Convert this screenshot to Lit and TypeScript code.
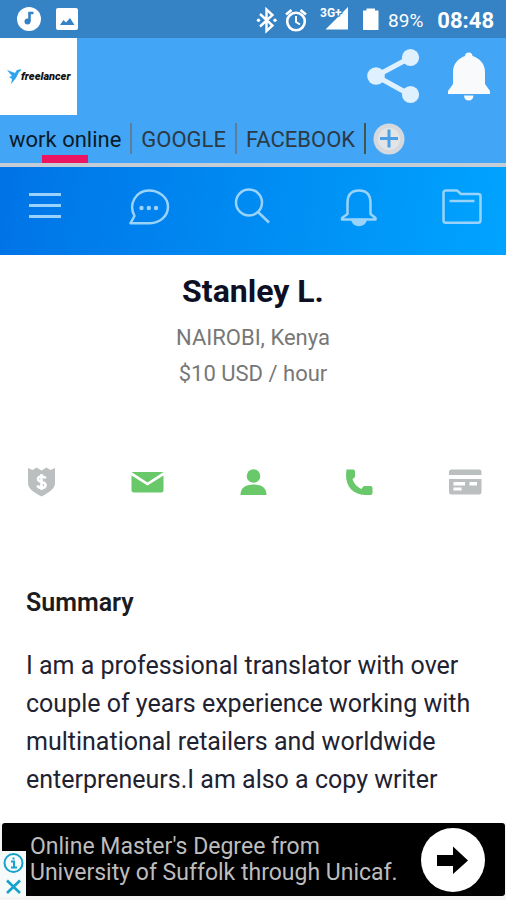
import { LitElement, html, css, svg, type TemplateResult } from "lit";
import { customElement, state } from "lit/decorators.js";

const navIcons: { label: string; art: TemplateResult }[] = [
  { label: "Menu", art: svg`<path d="M6 9.500h32M6 20.500h32M6 31.500h32" stroke-width="3"/>` },
  {
    label: "Messages",
    art: svg`<path d="M2.500 38.200L6.500 31C0 19 8 5.500 21 5.500C31 5.500 40 12.500 40 21.500C40 31 32 38.200 22 38.200Z"/>
      <g fill="currentColor" stroke="none"><circle cx="13.500" cy="23" r="2.200"/><circle cx="20.800" cy="23" r="2.200"/><circle cx="28" cy="23" r="2.200"/></g>`,
  },
  { label: "Search", art: svg`<circle cx="17" cy="17.500" r="13"/><path d="M26 27L37 37.500"/>` },
  {
    label: "Notifications",
    art: svg`<path d="M10.500 29V18C10.500 9.500 15 5.500 22 5.500S33.500 9.500 33.500 18V29L38.500 33V34.500H5V33Z"/>
      <path d="M15.500 35a6.500 5 0 0 0 13 0Z" fill="currentColor"/>`,
  },
  {
    label: "Projects",
    art: svg`<path d="M5 5.500H16L20 9H37Q39.500 9 39.500 11V35.500Q39.500 37.800 37 37.800H5Q2.500 37.800 2.500 35.500V8Q2.500 5.500 5 5.500Z"/><path d="M8.500 16H33.500" />`,
  },
];

const checks: { label: string; ok: boolean; art: TemplateResult }[] = [
  {
    label: "Payment not verified",
    ok: false,
    art: svg`<path d="M4 3L8.500 5L12.500 2.500L17.500 5.500L22.500 2.500L26.500 5L31 3V18C31 24 25 27.500 17.500 31.500C10 27.500 4 24 4 18Z"/>
      <path d="M21.500 13.500C20.500 11 14 10.500 14 14C14 18 21.500 16 21.500 20C21.500 24 14.500 23.500 13.500 20.500M17.500 9V25" fill="none" stroke="#fff" stroke-width="2.600"/>`,
  },
  {
    label: "Email verified",
    ok: true,
    art: svg`<path d="M1.500 7H33.500L17.500 17.500Z"/><path d="M1.500 10.500L17.500 20.500L33.500 10.500V25Q33.500 27.500 31 27.500H4Q1.500 27.500 1.500 25Z"/>`,
  },
  {
    label: "Profile completed",
    ok: true,
    art: svg`<circle cx="17.500" cy="11" r="6.800"/><path d="M4.500 30C4.500 23 9 19.500 17.500 19.500S30.500 23 30.500 30Z"/>`,
  },
  {
    label: "Phone verified",
    ok: true,
    art: svg`<path d="M4.500 4.500H11Q13 4.500 13 6.500V11.500Q13 12.500 10.500 14C12 19 15.500 22 19.500 24C21 21.500 21.500 21 23 21H28.500Q30.500 21 30.500 23V28Q30.500 30 28.500 30H23C11 29.500 4 22 4 10Z"/>`,
  },
  {
    label: "Deposit not made",
    ok: false,
    art: svg`<path d="M3.500 4.500H31Q33.500 4.500 33.500 6.500V10H1V6.500Q1 4.500 3.500 4.500ZM1 14H33.500V27.500Q33.500 29.500 31 29.500H3.500Q1 29.500 1 27.500Z"/>
      <path d="M5.500 17H17V20.500H5.500ZM5.500 22.500H13.500V25.500H5.500ZM21.500 17H29V20.500H21.500Z" fill="#fff"/>`,
  },
];

@customElement("app-root")
export class AppRoot extends LitElement {
  @state() private tab = "work online";

  static styles = css`
    :host {
      display: flex;
      flex-direction: column;
      min-height: 100vh;
      background: #fff;
      font-family: Roboto, "Liberation Sans", sans-serif;
      color: #1f2230;
    }
    svg { display: block; flex: none; }
    button, .link {
      display: block;
      padding: 0;
      border: 0;
      background: none;
      color: inherit;
      font: inherit;
      text-decoration: none;
      cursor: pointer;
    }
    .status {
      display: flex;
      align-items: center;
      height: 38px;
      padding: 0 12px 0 16px;
      background: #3582c4;
      color: #fff;
    }
    .grow { flex: 1; }
    .battery { font-size: 19px; padding: 3px 14px 0 6px; }
    .clock { font-size: 22px; font-weight: 700; padding-top: 3px; }
    .top { background: #42a5f5; border-bottom: 4px solid #c4ccd6; }
    .brand {
      display: flex;
      align-items: flex-start;
      justify-content: space-between;
    }
    .logo {
      display: flex;
      align-items: center;
      box-sizing: border-box;
      width: 77px;
      height: 77px;
      padding-left: 7px;
      background: #fff;
      color: #111;
      font-weight: 900;
      font-style: italic;
    }
    .wordmark { font-size: 11px; line-height: 16px; }
    .actions { display: flex; gap: 24px; padding: 8px 14px 0 0; }
    .tabs { display: flex; align-items: flex-start; height: 48px; }
    .tab {
      position: relative;
      height: 48px;
      padding: 0 9px;
      font-size: 22px;
      line-height: 50px;
      color: #2b3a45;
      white-space: nowrap;
    }
    .tab.on { color: #0b1a28; }
    .tab.on::after {
      content: "";
      position: absolute;
      left: 42px;
      bottom: 0;
      width: 46px;
      height: 8px;
      background: #ec1561;
    }
    .rule { width: 2px; height: 31px; margin-top: 8px; background: #5c7d9b; }
    .rule.dark { background: #45554a; }
    .add { margin: 7px 0 0 7px; }
    .nav {
      display: flex;
      justify-content: space-between;
      padding: 18px 22px 26px;
      background: linear-gradient(100deg, #0073e6, #00a4ff);
      color: #99d3fb;
    }
    main { flex: 1; }
    .profile { padding-top: 18px; text-align: center; }
    h1 { margin: 0 0 11px; font-size: 32px; line-height: 36px; font-weight: 700; color: #0d1024; }
    .meta { margin: 0; font-size: 22px; line-height: 36px; color: #777; }
    .checks {
      display: flex;
      justify-content: space-between;
      margin: 0;
      padding: 73px 24px 88px;
      list-style: none;
      color: #bcbfbf;
    }
    .ok { color: #69c869; }
    .about { padding: 0 24px 0 26px; }
    h2 { margin: 0 0 28px; font-size: 25px; line-height: 32px; font-weight: 600; color: #1b1c20; }
    .about p { margin: 0; font-size: 25px; line-height: 38px; }
    footer { position: relative; padding: 0 1px 4px 2px; background: #f4f4f4; }
    .ad {
      display: flex;
      align-items: center;
      justify-content: space-between;
      height: 73px;
      padding: 0 20px 0 28px;
      border-radius: 3px;
      background: #000;
      color: #bdbdbd;
      font-size: 23px;
      line-height: 26px;
    }
    .choices {
      position: absolute;
      left: 0;
      bottom: 3px;
      padding: 2px;
      background: #f6fafb;
      color: #15a2cb;
    }
  `;

  private renderStatus() {
    return html`
      <div class="status">
        <svg width="64" height="28" viewBox="16 6 64 28">
          <circle cx="29" cy="20" r="12" fill="#fff" />
          <circle cx="27.500" cy="22.500" r="3" fill="#3582c4" />
          <path d="M29.500 22.500V14H33.500" fill="none" stroke="#3582c4" stroke-width="2.600" />
          <rect x="56" y="9" width="22" height="22" rx="2" fill="#fff" />
          <path d="M60 26L63.500 21L66 23.500L70 19L74.500 26Z" fill="#3582c4" />
        </svg>
        <span class="grow"></span>
        <svg width="126" height="32" viewBox="256 3 126 32" role="img" aria-label="Bluetooth, alarm, 3G+, battery">
          <path d="M260 14L272.500 25.500L266.500 31V9.500L272.500 15L260 26.500" fill="none" stroke="#fff" stroke-width="2.400" />
          <circle cx="258.500" cy="20.200" r="1.700" fill="#fff" /><circle cx="275" cy="20.200" r="1.700" fill="#fff" />
          <circle cx="296" cy="21.500" r="8.800" fill="none" stroke="#fff" stroke-width="2.600" />
          <path d="M296 16V22L300 24.500" fill="none" stroke="#fff" stroke-width="2" />
          <path d="M286 14.500L291.500 10M306 14.500L300.500 10" stroke="#fff" stroke-width="2.600" />
          <path d="M348 7V29.500H325.500Z" fill="#fff" />
          <text x="320" y="17" font-size="12" font-weight="700" fill="#fff" stroke="#3582c4" stroke-width="2" paint-order="stroke">3G+</text>
          <path d="M363 10.500H366.500V8.500H375V10.500H378.500V30H363Z" fill="#fff" />
        </svg>
        <span class="battery">89%</span>
        <span class="clock">08:48</span>
      </div>
    `;
  }

  private renderTab(name: string, dark = false) {
    return html`
      <button class="tab ${this.tab === name ? "on" : ""}" @click=${() => (this.tab = name)}>${name}</button>
      <span class="rule ${dark ? "dark" : ""}"></span>
    `;
  }

  render() {
    return html`
      ${this.renderStatus()}
      <header class="top">
        <div class="brand">
          <a class="link logo" href="#" aria-label="freelancer">
            <svg width="14" height="16" viewBox="0 0 14 16">
              <path d="M0 1L8 4L10 1L16 0L12 3L9 9L4 15L5 10L2 8L5 7Z" fill="#2fa4ee" />
            </svg>
            <span class="wordmark">freelancer</span>
          </a>
          <div class="actions">
            <button aria-label="Share">
              <svg width="54" height="58" viewBox="366 46 54 58" fill="#dff0ff">
                <path d="M410.500 57.500L376 76L410.500 95" fill="none" stroke="#dff0ff" stroke-width="5" />
                <circle cx="410.500" cy="57.500" r="8.600" /><circle cx="376" cy="76" r="8.800" /><circle cx="410.500" cy="94.500" r="8.600" />
              </svg>
            </button>
            <button aria-label="Alerts">
              <svg width="48" height="58" viewBox="444 46 48 58" fill="#f8fafc">
                <path d="M465 56Q465 52.500 468.700 52.500T472.500 56C480 58.500 485 64 485 72V84L490 91V94H448V91L453 84V72C453 64 458 58.500 465 56Z" />
                <path d="M464 95.500H473.500Q473 100.500 468.700 100.500T464 95.500Z" />
              </svg>
            </button>
          </div>
        </div>
        <nav class="tabs">
          ${this.renderTab("work online")} ${this.renderTab("GOOGLE")} ${this.renderTab("FACEBOOK", true)}
          <button class="add" aria-label="Add tab">
            <svg width="32" height="34" viewBox="0 0 32 34">
              <circle cx="16" cy="17" r="15.500" fill="#d5d9dd" />
              <circle cx="16" cy="17" r="11" fill="#e2e4e6" />
              <path d="M7 16.500H25M16 7.500V25.500" stroke="#4b9fe6" stroke-width="3" />
            </svg>
          </button>
        </nav>
      </header>
      <nav class="nav">
        ${navIcons.map(
          (i) => html`<button aria-label=${i.label}>
            <svg width="44" height="44" viewBox="-1 0 44 44" fill="none" stroke="currentColor" stroke-width="2.500" stroke-linejoin="round">${i.art}</svg>
          </button>`
        )}
      </nav>
      <main>
        <section class="profile">
          <h1>Stanley L.</h1>
          <p class="meta">NAIROBI, Kenya</p>
          <p class="meta">$10 USD / hour</p>
        </section>
        <ul class="checks">
          ${checks.map(
            (c) => html`<li class=${c.ok ? "ok" : ""}>
              <svg width="34" height="34" viewBox="0 0 34 34" fill="currentColor" role="img" aria-label=${c.label}>${c.art}</svg>
            </li>`
          )}
        </ul>
        <section class="about">
          <h2>Summary</h2>
          <p>
            I am a professional translator with over couple of years experience working with multinational
            retailers and worldwide enterpreneurs.I am also a copy writer
          </p>
        </section>
      </main>
      <footer>
        <a class="link ad" href="#">
          <span>Online Master's Degree from<br />University of Suffolk through Unicaf.</span>
          <svg width="64" height="64" viewBox="0 0 64 64">
            <circle cx="32" cy="32" r="32" fill="#fff" />
            <path d="M16 27H32V18.500L47 32.500L32 46V38H16Z" />
          </svg>
        </a>
        <button class="choices" aria-label="Ad choices">
          <svg width="22" height="42" viewBox="0 0 22 42" fill="none" stroke="currentColor" stroke-width="2">
            <circle cx="11.500" cy="10" r="9" />
            <path d="M9 8.500H12V14.500M9 14.500H15M11.500 4.500V6.500" />
            <path d="M5 27.500L18 40M18 27.500L5 40" stroke-width="2.600" />
          </svg>
        </button>
      </footer>
    `;
  }
}
